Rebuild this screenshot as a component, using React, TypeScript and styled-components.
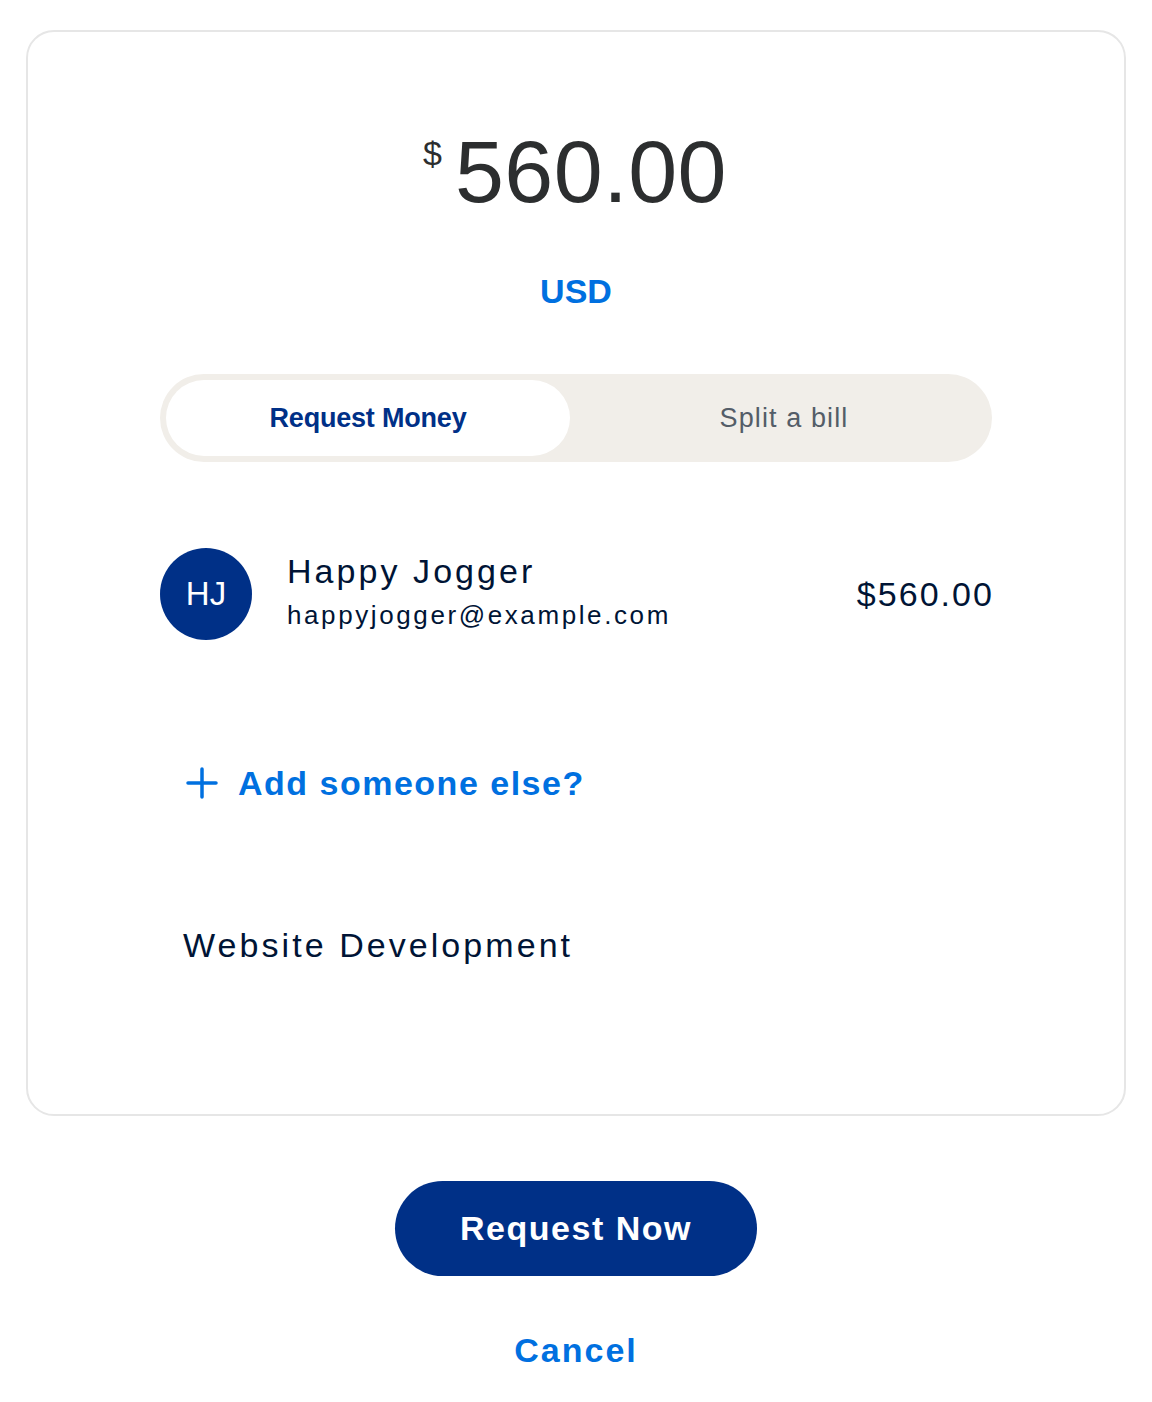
import styled, { createGlobalStyle } from "styled-components";

const GlobalStyle = createGlobalStyle`
  body {
    margin: 0;
    background: #ffffff;
    font-family: "Liberation Sans", Arial, sans-serif;
  }
`;

const colors = {
  blue: "#0070e0",
  navy: "#003087",
  ink: "#001435",
  amount: "#2c2e2f",
  muted: "#545d68",
  track: "#f1eee9",
  border: "#e6e6e6",
};

export default function App() {
  return (
    <>
      <GlobalStyle />
      <Page>
        <Card>
          <AmountRow>
            <Sign>$</Sign>
            <Value>560.00</Value>
          </AmountRow>
          <Currency>USD</Currency>

          <Toggle>
            <ToggleOption $active>Request Money</ToggleOption>
            <ToggleOption>Split a bill</ToggleOption>
          </Toggle>

          <Recipient
            initials="HJ"
            name="Happy Jogger"
            email="happyjogger@example.com"
            amount="$560.00"
          />

          <AddRow>
            <PlusIcon />
            <span>Add someone else?</span>
          </AddRow>

          <Note>Website Development</Note>
        </Card>

        <Actions>
          <PrimaryButton>Request Now</PrimaryButton>
          <LinkButton>Cancel</LinkButton>
        </Actions>
      </Page>
    </>
  );
}

function PlusIcon() {
  return (
    <svg width="32" height="32" viewBox="0 0 32 32" fill="none">
      <path
        d="M2 16h28M16 2v28"
        stroke={colors.blue}
        strokeWidth="3.5"
        strokeLinecap="round"
      />
    </svg>
  );
}

function Recipient({ initials, name, email, amount }: any) {
  return (
    <RecipientRow>
      <Avatar>{initials}</Avatar>
      <Details>
        <Name>{name}</Name>
        <Email>{email}</Email>
      </Details>
      <RowAmount>{amount}</RowAmount>
    </RecipientRow>
  );
}

const Page = styled.div`
  padding: 30px 26px 0;
  display: flex;
  flex-direction: column;
  align-items: center;
`;

const Card = styled.div`
  width: 100%;
  box-sizing: border-box;
  border: 2px solid ${colors.border};
  border-radius: 28px;
  padding: 96px 132px 148px;
`;

const AmountRow = styled.div`
  display: flex;
  justify-content: center;
  align-items: flex-start;
  gap: 13px;
  padding-right: 2px;
  color: ${colors.amount};
  line-height: 1;
`;

const Sign = styled.span`
  font-size: 34px;
  line-height: 1;
  margin-top: 8px;
`;

const Value = styled.span`
  font-size: 88px;
  line-height: 1;
  letter-spacing: 0.5px;
`;

const Currency = styled.div`
  margin-top: 58px;
  text-align: center;
  font-size: 34px;
  font-weight: 700;
  line-height: 1;
  color: ${colors.blue};
`;

const Toggle = styled.div`
  margin-top: 66px;
  height: 88px;
  box-sizing: border-box;
  padding: 6px;
  display: grid;
  grid-template-columns: 404px 1fr;
  background: ${colors.track};
  border-radius: 44px;
`;

const ToggleOption = styled.div<{ $active?: boolean }>`
  display: flex;
  align-items: center;
  justify-content: center;
  border-radius: 38px;
  font-size: 27px;
  padding-left: ${({ $active }) => ($active ? "0" : "12px")};
  letter-spacing: ${({ $active }) => ($active ? "-0.2px" : "1.1px")};
  background: ${({ $active }) => ($active ? "#ffffff" : "transparent")};
  color: ${({ $active }) => ($active ? colors.navy : colors.muted)};
  font-weight: ${({ $active }) => ($active ? 700 : 400)};
`;

const RecipientRow = styled.div`
  margin-top: 86px;
  display: flex;
  align-items: center;
  gap: 35px;
  color: ${colors.ink};
`;

const Avatar = styled.div`
  width: 92px;
  height: 92px;
  flex-shrink: 0;
  border-radius: 50%;
  background: ${colors.navy};
  color: #ffffff;
  font-size: 33px;
  display: flex;
  align-items: center;
  justify-content: center;
`;

const Details = styled.div`
  flex: 1;
  display: flex;
  flex-direction: column;
  gap: 8px;
  padding-bottom: 6px;
`;

const Name = styled.div`
  font-size: 34px;
  line-height: 1.2;
  letter-spacing: 0.09em;
`;

const Email = styled.div`
  font-size: 26px;
  line-height: 1.2;
  letter-spacing: 0.1em;
`;

const RowAmount = styled.div`
  font-size: 34px;
  line-height: 1.2;
  letter-spacing: 0.06em;
  margin-right: -2px;
`;

const AddRow = styled.div`
  margin-top: 123px;
  padding-left: 26px;
  display: flex;
  align-items: center;
  gap: 20px;
  font-size: 34px;
  font-weight: 700;
  line-height: 1.2;
  letter-spacing: 1.5px;
  color: ${colors.blue};
`;

const Note = styled.div`
  margin-top: 121px;
  padding-left: 23px;
  font-size: 34px;
  line-height: 1.2;
  letter-spacing: 0.09em;
  color: ${colors.ink};
`;

const Actions = styled.div`
  margin-top: 65px;
  display: flex;
  flex-direction: column;
  align-items: center;
`;

const PrimaryButton = styled.button`
  width: 362px;
  height: 95px;
  border: none;
  border-radius: 48px;
  background: ${colors.navy};
  color: #ffffff;
  font-family: inherit;
  font-size: 34px;
  font-weight: 700;
  letter-spacing: 1.5px;
`;

const LinkButton = styled.button`
  margin-top: 54px;
  padding: 0;
  border: none;
  background: none;
  font-family: inherit;
  font-size: 34px;
  font-weight: 700;
  line-height: 1.2;
  letter-spacing: 2px;
  color: ${colors.blue};
`;
